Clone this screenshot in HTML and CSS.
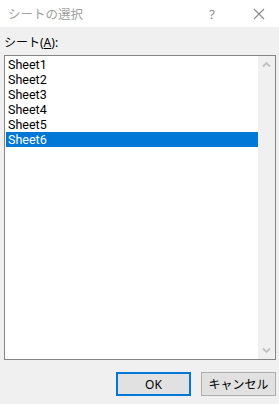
FILE: index.html
```html
<!DOCTYPE html>
<html lang="ja">

<head>
    <meta charset="UTF-8">
    <title>シートの選択</title>
    <link rel="stylesheet" href="styles.css">
</head>

<body>
    <div class="dialog">
        <div class="titlebar">
            <span class="title">シートの選択</span>
            <span class="help">?</span>
            <svg class="close" width="12" height="12" viewBox="0 0 12 12">
                <path d="M1 1 L11 11 M11 1 L1 11" stroke="#8a8a8a" stroke-width="1.1" fill="none" />
            </svg>
        </div>
        <div class="content">
            <label class="caption">シート(<u>A</u>):</label>
            <div class="listbox">
                <ul class="items">
                    <li>Sheet1</li>
                    <li>Sheet2</li>
                    <li>Sheet3</li>
                    <li>Sheet4</li>
                    <li>Sheet5</li>
                    <li class="selected">Sheet6</li>
                </ul>
                <div class="scrollbar">
                    <svg width="17" height="17" viewBox="0 0 17 17">
                        <path d="M5 10.5 L8.5 7 L12 10.5" stroke="#c2c2c2" stroke-width="1.8" fill="none" />
                    </svg>
                    <svg width="17" height="17" viewBox="0 0 17 17">
                        <path d="M5 6.5 L8.5 10 L12 6.5" stroke="#c2c2c2" stroke-width="1.8" fill="none" />
                    </svg>
                </div>
            </div>
            <div class="buttons">
                <button class="default">OK</button>
                <button>キャンセル</button>
            </div>
        </div>
    </div>
</body>

</html>
```

FILE: styles.css
```css
body{
    margin: 0;
    background-color: #f0f0f0;
    font-family: "Noto Sans", "Noto Sans CJK JP", sans-serif;
    font-size: 12px;
}
.dialog{
    width: 279px;
    height: 404px;
}
.titlebar{
    height: 27px;
    background-color: white;
    display: flex;
    align-items: center;
}
.title{
    margin-left: 8px;
    color: #a0a0a0;
    font-size: 12.5px;
    flex: 1;
}
.help{
    color: #8a8a8a;
    font-size: 13px;
    margin-right: 38px;
}
.close{
    margin-right: 14px;
}
.content{
    padding: 8px 3px 0 4px;
}
.caption{
    display: block;
    height: 20px;
    line-height: 16px;
    color: black;
}
.listbox{
    height: 303px;
    border: 1px solid #858585;
    background-color: white;
    display: flex;
}
.items{
    list-style: none;
    margin: 0;
    padding: 1px 0 0 1px;
    flex: 1;
}
.items li{
    height: 15px;
    line-height: 15px;
    padding-left: 2px;
    font-family: Roboto, "Noto Sans", sans-serif;
    font-size: 12.5px;
    color: black;
}
.items li.selected{
    background-color: #0078d7;
    color: white;
}
.scrollbar{
    width: 17px;
    background-color: #f0f0f0;
    display: flex;
    flex-direction: column;
    justify-content: space-between;
}
.buttons{
    display: flex;
    justify-content: flex-end;
    gap: 10px;
    margin-top: 12px;
}
button{
    width: 75px;
    height: 24px;
    background-color: #e1e1e1;
    border: 1px solid #adadad;
    font-family: "Noto Sans", "Noto Sans CJK JP", sans-serif;
    font-size: 12px;
    color: black;
    padding: 0;
}
button.default{
    border: 2px solid #0078d7;
}
```
